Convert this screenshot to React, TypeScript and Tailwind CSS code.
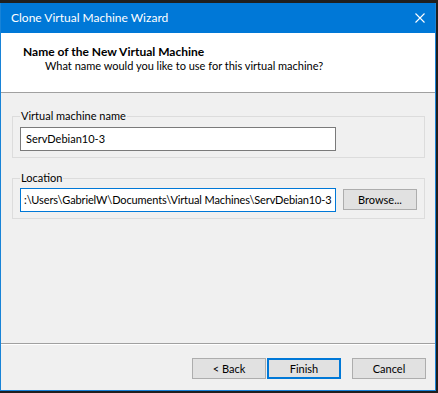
import React from 'react'

const font = { fontFamily: 'Lato, "Segoe UI", sans-serif' }

function GroupBox({ label, children, className }: { label: string; children: React.ReactNode; className?: string }) {
  return (
    <div className={'relative ml-[11px] w-[413px] border border-[#dcdcdc] ' + (className ?? '')}>
      <span className="absolute left-[7px] top-[-9px] bg-[#f0f0f0] px-[1px] text-[11px] leading-[16px] text-black">
        {label}
      </span>
      {children}
    </div>
  )
}

function WinButton({ label, primary }: { label: string; primary?: boolean }) {
  return (
    <button
      className={
        'flex h-[21px] w-[74px] items-center justify-center bg-[#e1e1e1] text-[11px] leading-none text-black ' +
        (primary ? 'border-2 border-[#0078d7]' : 'border border-[#adadad]')
      }
    >
      {label}
    </button>
  )
}

export default function App() {
  return (
    <div className="h-[393px] w-[438px] overflow-hidden bg-[#1f1f1f] pt-[3px]" style={font}>
      <div className="flex h-[388px] w-[436px] flex-col border-x border-b border-[#1883d7] bg-[#f0f0f0]">
        {/* title bar */}
        <div className="flex h-[30px] shrink-0 items-center justify-between bg-[#0078d7] pl-[10px] pr-[8px] text-white">
          <span className="text-[12px]">Clone Virtual Machine Wizard</span>
          <svg width="10" height="10" viewBox="0 0 10 10" className="mr-[2px]">
            <path d="M0.5 0.5 L9.5 9.5 M9.5 0.5 L0.5 9.5" stroke="white" strokeWidth="1.1" />
          </svg>
        </div>

        {/* header */}
        <div className="h-[60px] shrink-0 border-b border-[#a0a0a0] bg-white pl-[22px] pt-[12px] text-black">
          <div className="text-[12px] font-bold leading-[14px]">Name of the New Virtual Machine</div>
          <div className="pl-[22px] text-[11px] leading-[14px]">What name would you like to use for this virtual machine?</div>
        </div>

        {/* body */}
        <div className="flex flex-1 flex-col pt-[23px]">
          <GroupBox label="Virtual machine name" className="h-[42px]">
            <div className="ml-[7px] mt-[10px] flex h-[24px] w-[316px] items-center border border-[#7a7a7a] bg-white pl-[5px] text-[11px] text-black">
              ServDebian10-3
            </div>
          </GroupBox>

          <GroupBox label="Location" className="mt-[20px] h-[41px]">
            <div className="ml-[7px] mt-[9px] flex items-start gap-[7px]">
              <div className="flex h-[24px] w-[316px] shrink-0 items-center overflow-hidden whitespace-nowrap border border-[#0078d7] bg-white pl-[3px] text-[11px] tracking-[-0.12px] text-black">
                :\Users\GabrielW\Documents\Virtual Machines\ServDebian10-3
              </div>
              <div className="mt-[1px]">
                <WinButton label="Browse..." />
              </div>
            </div>
          </GroupBox>
        </div>

        {/* footer */}
        <div className="h-[47px] shrink-0 border-t border-[#a0a0a0]">
          <div className="flex border-t border-white pl-[191px] pt-[13px]">
            <WinButton label="< Back" />
            <div className="ml-[1px]">
              <WinButton label="Finish" primary />
            </div>
            <div className="ml-[11px]">
              <WinButton label="Cancel" />
            </div>
          </div>
        </div>
      </div>
    </div>
  )
}
